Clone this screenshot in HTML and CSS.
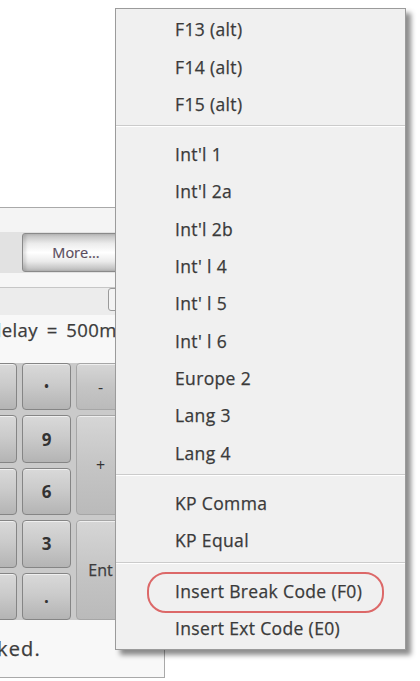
FILE: index.html
```html
<!DOCTYPE html>
<html lang="en">
<head>
<meta charset="utf-8">
<title>Keyboard menu</title>
<link rel="stylesheet" href="styles.css">
</head>
<body>
<section class="win">
  <div class="win-head"></div>
  <div class="toolbar"><button class="more">More...</button></div>
  <div class="gap-row"></div>
  <div class="field"><span class="thumb"></span></div>
  <div class="delay"><span>Typematic delay = 500ms</span></div>
  <div class="keypad">
    <div class="key">/</div>
    <div class="key dot">&bull;</div>
    <div class="key alt">-</div>
    <div class="key">8</div>
    <div class="key">9</div>
    <div class="key alt tall">+</div>
    <div class="key">5</div>
    <div class="key">6</div>
    <div class="key">2</div>
    <div class="key">3</div>
    <div class="key alt tall ent">Ent</div>
    <div class="key">0</div>
    <div class="key">.</div>
  </div>
  <div class="status"><span>Keyboard is locked.</span></div>
</section>

<nav class="menu">
  <div class="item">F13 (alt)</div>
  <div class="item">F14 (alt)</div>
  <div class="item">F15 (alt)</div>
  <div class="sep"></div>
  <div class="item">Int'l 1</div>
  <div class="item">Int'l 2a</div>
  <div class="item">Int'l 2b</div>
  <div class="item">Int' l 4</div>
  <div class="item">Int' l 5</div>
  <div class="item">Int' l 6</div>
  <div class="item">Europe 2</div>
  <div class="item">Lang 3</div>
  <div class="item">Lang 4</div>
  <div class="sep"></div>
  <div class="item">KP Comma</div>
  <div class="item">KP Equal</div>
  <div class="sep last"></div>
  <div class="item marked">Insert Break Code (F0)</div>
  <div class="item">Insert Ext Code (E0)</div>
</nav>
</body>
</html>
```
FILE: styles.css
```css
* { box-sizing: border-box; }

html, body {
  margin: 0;
  padding: 0;
}

body {
  width: 420px;
  height: 681px;
  overflow: hidden;
  position: relative;
  background: #ffffff;
  font-family: "Open Sans", "Liberation Sans", sans-serif;
  color: #3b3b3b;
}

/* background window */
.win {
  position: absolute;
  left: -2px;
  top: 207px;
  width: 167px;
  height: 471px;
  border: 1px solid #a9a9a9;
  background: #f8f8f8;
  overflow: hidden;
  display: flex;
  flex-direction: column;
}

.win-head {
  height: 24px;
  flex: none;
  background: #f4f4f4;
}

.toolbar {
  height: 41px;
  flex: none;
  background: #e2e2e2;
  display: flex;
  align-items: center;
  padding-left: 23px;
}

.more {
  flex: none;
  width: 108px;
  height: 39px;
  border: 1px solid #8a8a8a;
  border-radius: 3px;
  background: linear-gradient(#bdbdbd, #ececec 26%, #ffffff 50%, #ebebeb 74%, #b8b8b8);
  box-shadow: inset 3px 0 3px rgba(0,0,0,0.12);
  font-family: "Open Sans", sans-serif;
  font-size: 14.5px;
  color: #5a4c5c;
  -webkit-text-stroke: 0.2px #5a4c5c;
  text-align: center;
  padding: 0;
}

.gap-row {
  height: 15px;
  flex: none;
  background: #f6f6f6;
  border-bottom: 1px solid #c6c6c6;
}

.field {
  height: 27px;
  flex: none;
  background: #ececec;
  display: flex;
  align-items: flex-start;
  padding-left: 109px;
}

.thumb {
  width: 20px;
  height: 23px;
  border: 1px solid #9a9a9a;
  border-radius: 3px;
  background: #f3f3f3;
}

.delay {
  height: 28px;
  flex: none;
  width: 127px;
  display: flex;
  justify-content: flex-end;
  align-items: center;
  white-space: nowrap;
  font-size: 18.5px;
  letter-spacing: 0.4px;
  word-spacing: 3.5px;
  color: #3c3c3c;
  -webkit-text-stroke: 0.25px #3c3c3c;
}

.keypad {
  flex: none;
  margin-top: 20px;
  margin-left: -31px;
  display: grid;
  grid-template-columns: repeat(3, 49px);
  grid-template-rows: repeat(5, 47.4px);
  gap: 5px;
  background: #cacaca;
  width: max-content;
}

.key {
  border: 1px solid #858585;
  border-radius: 4px;
  background: linear-gradient(#d9d9d9, #cbcbcb 45%, #b4b4b4);
  box-shadow: inset 0 1px 0 rgba(255,255,255,0.6);
  display: flex;
  align-items: center;
  justify-content: center;
  font-size: 17px;
  font-weight: 700;
  color: #333333;
}

.key.dot {
  font-size: 12px;
}

.key.alt {
  border-color: #a6a6a6;
  background: linear-gradient(#d6d6d6, #c5c5c5 50%, #bababa);
  font-weight: 400;
  font-size: 16px;
}

.key.tall {
  grid-row: span 2;
}

.key.ent {
  font-size: 16px;
  color: #3c3c3c;
  -webkit-text-stroke: 0.25px #3c3c3c;
}

.status {
  height: 58px;
  flex: none;
  width: 42px;
  display: flex;
  justify-content: flex-end;
  align-items: center;
  white-space: nowrap;
  font-size: 20px;
  letter-spacing: 1.2px;
  color: #3c3c3c;
  -webkit-text-stroke: 0.25px #3c3c3c;
}

/* popup menu */
.menu {
  position: absolute;
  left: 115px;
  top: 8px;
  width: 291px;
  border: 1px solid #9b9b9b;
  background: #f0f0f0;
  padding: 2.3px 0 1px;
  box-shadow: 5px 5px 5px rgba(0, 0, 0, 0.45);
}

.item {
  position: relative;
  height: 37.3px;
  line-height: 37.3px;
  padding-left: 59px;
  font-size: 17.5px;
  letter-spacing: 0.35px;
  color: #3a3a3a;
  -webkit-text-stroke: 0.25px #3a3a3a;
  white-space: nowrap;
}

.sep {
  height: 2px;
  margin: 2.3px 0 8.7px;
  background: #cbcbcb;
  border-bottom: 1px solid #ffffff;
}

.sep.last {
  margin-bottom: 9.4px;
}

.item.marked::after {
  content: "";
  position: absolute;
  left: 31px;
  right: 21px;
  top: -1px;
  height: 37px;
  border: 2px solid #dc6868;
  border-radius: 19px;
}
```
